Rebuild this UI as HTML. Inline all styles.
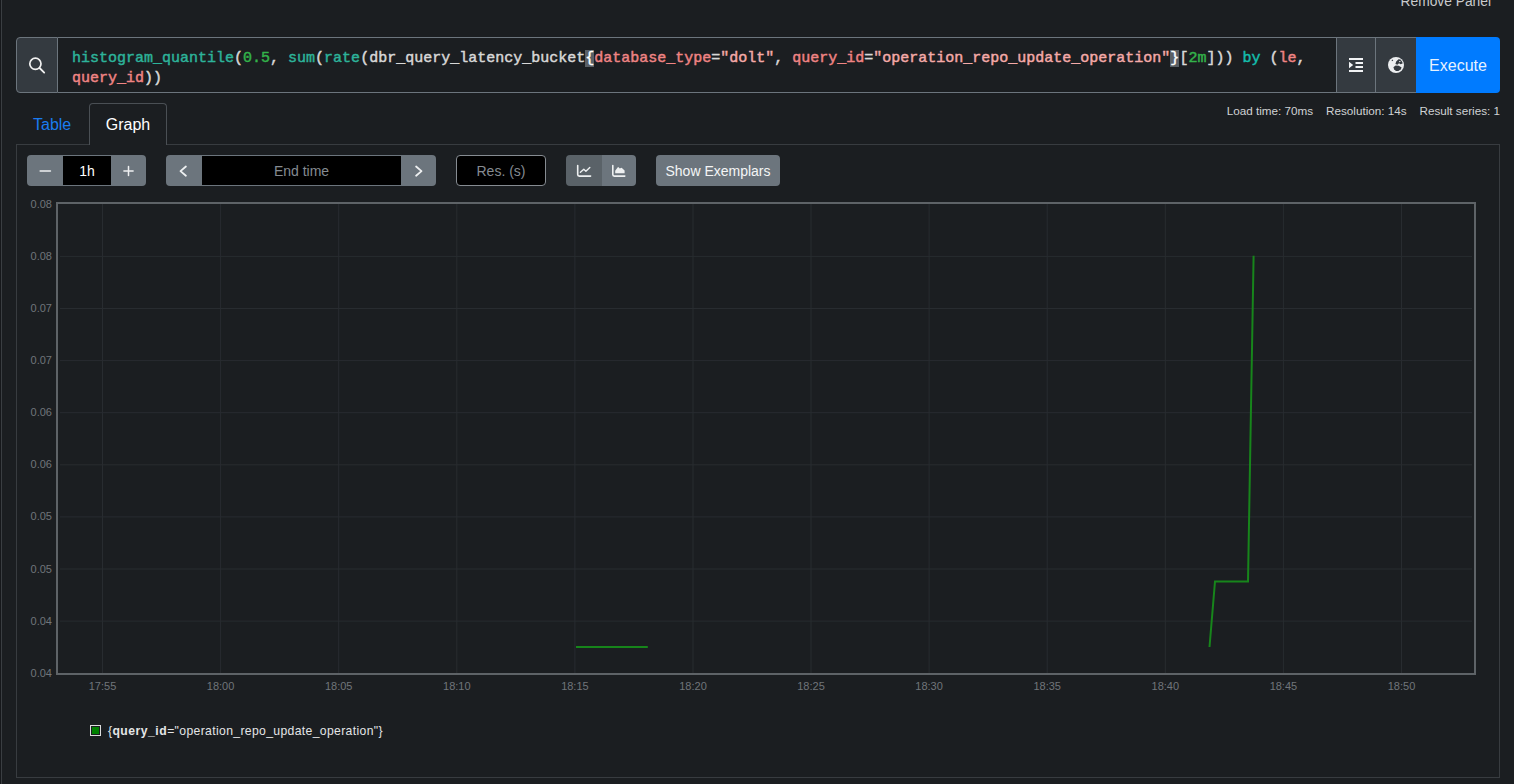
<!DOCTYPE html>
<html lang="en">
<head>
<meta charset="utf-8">
<title>Prometheus Time Series Collection and Processing Server</title>
<style>
*{box-sizing:border-box;margin:0;padding:0}
html,body{width:1514px;height:784px;overflow:hidden;background:#1b1e21}
body{position:relative;font-family:"Liberation Sans",sans-serif;color:#fff}
.abs{position:absolute}
.leftbar{left:0;top:0;width:1px;height:784px;background:#16181b}
.leftline{left:1px;top:0;width:1px;height:784px;background:#3a3e42}
.remove{right:23px;top:-5.7px;font-size:13.8px;color:#c9cbcd;white-space:nowrap}
/* query bar */
.qbar{left:16px;top:37px;width:1484px;height:56px}
.qprep{left:0;top:0;width:42px;height:56px;background:#343a40;border:1px solid #6c757d;border-radius:4px 0 0 4px}
.qcode{left:42px;top:0;width:1279px;height:56px;border:1px solid #6c757d;border-left:0;border-right:0;background:#1b1e21}
.qtext{left:56px;top:11.8px;font-family:"Liberation Mono",monospace;font-size:15px;line-height:20.6px;white-space:pre;color:#d8d8d8;font-weight:normal;-webkit-text-stroke:0.45px;letter-spacing:0}
.fn{color:#2db39a}.num{color:#33b24a}.lbl{color:#f08484}.str{color:#f5aaa8}.kw{color:#14bfad}.pl{color:#d4d4d4}
.br{background:#5a6066;color:#fff}
.qbtn{top:0;height:56px;background:#343a40;border:1px solid #6c757d}
.qb1{left:1320px;width:40px}
.qb2{left:1359px;width:42px}
.exec{left:1400px;top:0;width:84px;height:56px;background:#007bff;border-radius:0 4px 4px 0;color:#e6f2ff;font-size:16px;line-height:58.4px;text-align:center}
.stats{right:14px;top:104px;font-size:11.7px;color:#d0d2d4;white-space:nowrap}
.stats span{margin-left:9.6px}
/* tabs */
.tab-table{left:33px;top:115.7px;font-size:16px;color:#1a7cf0}
.tab-graph{left:89px;top:103px;width:78px;height:42px;border:1px solid #4a4f54;border-bottom:0;border-radius:4px 4px 0 0;background:#1b1e21;font-size:16px;color:#fff;text-align:center;line-height:41px}
.panel{left:16px;top:144px;width:1484px;height:634px;border:1px solid #383c40;border-top:1px solid #383c40}
/* controls */
.btn{background:#6c757d;color:#fff;height:31px;top:155px}
.inp{background:#000;height:31px;top:155px;color:#fff;font-size:14px;text-align:center;line-height:31px}
.ph{color:#858b91}
/* chart */
.plot{left:56px;top:202px;width:1420px;height:473px;border:2px solid #6a6f73}
.yl{font-size:11px;color:#70757a;width:52px;text-align:right;left:0}
.xl{font-size:11px;color:#70757a;width:60px;text-align:center;top:680px}
.legend-box{left:90px;top:725px;width:11px;height:11px;border:1px solid #ddd;padding:1px}.legend-box i{display:block;width:7px;height:7px;background:#008000}
.legend{left:108px;top:724px;font-size:12.2px;color:#e4e5e6;white-space:nowrap;letter-spacing:0.35px}.legend b{letter-spacing:0.49px}
</style>
</head>
<body>
<div class="abs leftbar"></div>
<div class="abs leftline"></div>
<div class="abs remove">Remove Panel</div>

<div class="abs qbar">
  <div class="abs qprep">
    <svg class="abs" style="left:0;top:0" width="40" height="54" viewBox="0 0 40 54"><circle cx="18.4" cy="25.8" r="5.6" fill="none" stroke="#f1f1f1" stroke-width="1.7"/><path d="M22.6 30 L27.2 34.6" stroke="#f1f1f1" stroke-width="1.8" stroke-linecap="round"/></svg>
  </div>
  <div class="abs qcode"></div>
  <div class="abs qtext"><span class="fn">histogram_quantile</span>(<span class="num">0.5</span>, <span class="fn">sum</span>(<span class="fn">rate</span>(dbr_query_latency_bucket<span class="br">{</span><span class="lbl">database_type</span>=<span class="str">"dolt"</span>, <span class="lbl">query_id</span>=<span class="str">"operation_repo_update_operation"</span><span class="br">}</span>[<span class="num">2m</span>])) <span class="kw">by</span> (<span class="lbl">le</span>,
<span class="lbl">query_id</span>))</div>
  <div class="abs qbtn qb1"><svg class="abs" style="left:-1px;top:-1px" width="40" height="56" viewBox="1336 37 40 56"><path d="M1349 58h14v2h-14zM1355.5 62h7.5v2h-7.5zM1355.5 66h7.5v2h-7.5zM1349 70h14v2h-14zM1349 61.8L1353.2 65L1349 68.2z" fill="#f1f3f5"/></svg></div>
  <div class="abs qbtn qb2"><svg class="abs" style="left:-1px;top:-1px" width="42" height="56" viewBox="1375 37 42 56"><circle cx="1396" cy="65" r="8" fill="#eceef0"/><path d="M1393.4 67.2L1395.6 65.4L1398.8 65.7L1401.6 67.4L1400.6 69.4L1398.4 71L1396 71.1L1394.2 69.4Z" fill="#343a40"/><path d="M1395.4 64L1396.2 61.5L1398.5 59.3L1400.5 59.6L1402.3 62L1402.6 63.6L1400.6 64.2L1399 63.2L1397.4 64.7Z" fill="#343a40"/><path d="M1399 61.2L1400.4 60.8L1400.6 61.8L1399.4 62.2Z" fill="#eceef0"/><path d="M1391.6 60.2L1392.8 59.4L1393.2 60.4L1392 61.2Z" fill="#343a40"/></svg></div>
  <div class="abs exec">Execute</div>
</div>

<div class="abs stats"><span>Load time: 70ms</span> <span>Resolution: 14s</span> <span>Result series: 1</span></div>

<div class="abs panel"></div>
<div class="abs tab-table">Table</div>
<div class="abs tab-graph">Graph</div>

<div id="controls">
<div class="abs btn" style="left:27px;width:36px;border-radius:4px 0 0 4px"><svg class="abs" style="left:0;top:0" width="36" height="31"><path d="M13.2 16H23.4" stroke="#eef0f1" stroke-width="1.6" stroke-linecap="round"/></svg></div>
<div class="abs inp" style="left:63px;width:48px;border-top:1px solid #6c757d;border-bottom:1px solid #6c757d;line-height:31.6px">1h</div>
<div class="abs btn" style="left:111px;width:35px;border-radius:0 4px 4px 0"><svg class="abs" style="left:0;top:0" width="35" height="31"><path d="M12.9 16H22.1M17.5 11.4V20.6" stroke="#eef0f1" stroke-width="1.5" stroke-linecap="round"/></svg></div>
<div class="abs btn" style="left:166px;width:36px;border-radius:4px 0 0 4px"><svg class="abs" style="left:0;top:0" width="36" height="31"><path d="M19.9 11.5L14.5 16.1L19.9 20.7" fill="none" stroke="#eef0f1" stroke-width="1.8" stroke-linecap="round" stroke-linejoin="round"/></svg></div>
<div class="abs inp ph" style="left:202px;width:199px;border-top:1px solid #6c757d;border-bottom:1px solid #6c757d;line-height:31.6px">End time</div>
<div class="abs btn" style="left:401px;width:35px;border-radius:0 4px 4px 0"><svg class="abs" style="left:0;top:0" width="35" height="31"><path d="M15.1 11.5L20.5 16.1L15.1 20.7" fill="none" stroke="#eef0f1" stroke-width="1.8" stroke-linecap="round" stroke-linejoin="round"/></svg></div>
<div class="abs inp ph" style="left:456px;width:90px;border:1px solid #868c92;border-radius:4px;line-height:31.6px">Res. (s)</div>
<div class="abs btn" style="left:566px;width:36px;border-radius:4px 0 0 4px;background:#5a6268"><svg class="abs" style="left:0;top:0" width="35" height="31"><path d="M11.7 10.6V19.6Q11.7 21.1 13.2 21.1H24.6" fill="none" stroke="#eef0f1" stroke-width="1.6" stroke-linecap="round" stroke-linejoin="round"/><path d="M14.4 17.3L17.8 14.3L19.9 16.3L23.8 12.5" fill="none" stroke="#eef0f1" stroke-width="1.4" stroke-linecap="round" stroke-linejoin="round"/></svg></div>
<div class="abs btn" style="left:602px;width:34px;border-radius:0 4px 4px 0"><svg class="abs" style="left:-1px;top:0" width="35" height="31"><path d="M11.8 10.6V19.6Q11.8 21.1 13.3 21.1H23.8" fill="none" stroke="#eef0f1" stroke-width="1.6" stroke-linecap="round" stroke-linejoin="round"/><path d="M14.2 18.3V15.8L16.8 12.3Q17.3 11.9 17.8 12.4L18.8 13.6L19.9 12.9Q20.4 12.7 20.9 13.1L23.6 15.5V18.3Z" fill="#eef0f1"/></svg></div>
<div class="abs btn" style="left:656px;width:124px;border-radius:4px;font-size:14px;text-align:center;line-height:33.6px;color:#f4f5f6">Show Exemplars</div>
</div>
<div id="chart">
<svg class="abs" style="left:0;top:195px" width="1514" height="490" viewBox="0 195 1514 490">
<path d="M102.5 204V673" stroke="#282c30" stroke-width="1"/>
<path d="M220.6 204V673" stroke="#282c30" stroke-width="1"/>
<path d="M338.7 204V673" stroke="#282c30" stroke-width="1"/>
<path d="M456.8 204V673" stroke="#282c30" stroke-width="1"/>
<path d="M574.9 204V673" stroke="#282c30" stroke-width="1"/>
<path d="M693.0 204V673" stroke="#282c30" stroke-width="1"/>
<path d="M811.0 204V673" stroke="#282c30" stroke-width="1"/>
<path d="M929.1 204V673" stroke="#282c30" stroke-width="1"/>
<path d="M1047.2 204V673" stroke="#282c30" stroke-width="1"/>
<path d="M1165.3 204V673" stroke="#282c30" stroke-width="1"/>
<path d="M1283.4 204V673" stroke="#282c30" stroke-width="1"/>
<path d="M1401.5 204V673" stroke="#282c30" stroke-width="1"/>
<path d="M60 256.4H1472" stroke="#282c30" stroke-width="1"/>
<path d="M60 308.5H1472" stroke="#282c30" stroke-width="1"/>
<path d="M60 360.6H1472" stroke="#282c30" stroke-width="1"/>
<path d="M60 412.7H1472" stroke="#282c30" stroke-width="1"/>
<path d="M60 464.8H1472" stroke="#282c30" stroke-width="1"/>
<path d="M60 516.9H1472" stroke="#282c30" stroke-width="1"/>
<path d="M60 569.0H1472" stroke="#282c30" stroke-width="1"/>
<path d="M60 621.1H1472" stroke="#282c30" stroke-width="1"/>
<rect x="57" y="203" width="1418" height="471" fill="none" stroke="#5e6367" stroke-width="2"/>
<path d="M576 647H647.8" fill="none" stroke="#17851b" stroke-width="2"/>
<path d="M1209.5 647L1215 581.5H1248L1253.6 255.8" fill="none" stroke="#17851b" stroke-width="2" stroke-linejoin="miter"/>
</svg>
<div class="abs yl" style="top:197.8px">0.08</div>
<div class="abs yl" style="top:249.9px">0.08</div>
<div class="abs yl" style="top:302.0px">0.07</div>
<div class="abs yl" style="top:354.1px">0.07</div>
<div class="abs yl" style="top:406.2px">0.06</div>
<div class="abs yl" style="top:458.3px">0.06</div>
<div class="abs yl" style="top:510.4px">0.05</div>
<div class="abs yl" style="top:562.5px">0.05</div>
<div class="abs yl" style="top:614.6px">0.04</div>
<div class="abs yl" style="top:666.7px">0.04</div>
<div class="abs xl" style="left:72.5px">17:55</div>
<div class="abs xl" style="left:190.6px">18:00</div>
<div class="abs xl" style="left:308.7px">18:05</div>
<div class="abs xl" style="left:426.8px">18:10</div>
<div class="abs xl" style="left:544.9px">18:15</div>
<div class="abs xl" style="left:663.0px">18:20</div>
<div class="abs xl" style="left:781.0px">18:25</div>
<div class="abs xl" style="left:899.1px">18:30</div>
<div class="abs xl" style="left:1017.2px">18:35</div>
<div class="abs xl" style="left:1135.3px">18:40</div>
<div class="abs xl" style="left:1253.4px">18:45</div>
<div class="abs xl" style="left:1371.5px">18:50</div>
</div>
<div class="abs legend-box"><i></i></div>
<div class="abs legend">{<b>query_id</b>="operation_repo_update_operation"}</div>
</body>
</html>
